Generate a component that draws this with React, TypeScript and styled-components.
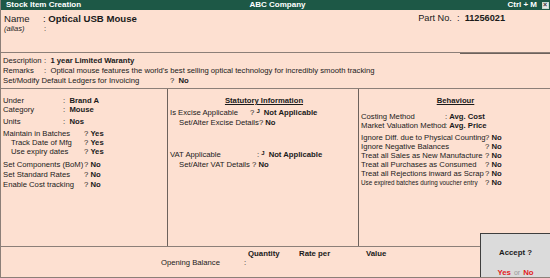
import React from 'react';
import styled, { createGlobalStyle } from 'styled-components';

const Global = createGlobalStyle`
  body {
    margin: 0;
    background: #fde0d1;
    font-family: "Liberation Sans", Arial, sans-serif;
  }
`;

const Screen = styled.div`
  position: relative;
  width: 550px;
  height: 278px;
  box-sizing: border-box;
  background: #fde0d1;
  border-left: 1px solid #8c7f78;
  border-bottom: 1px solid #8c7f78;
  color: #1a1a1a;
  font-size: 7.7px;
  display: flex;
  flex-direction: column;
  overflow: hidden;
`;

const TitleBar = styled.div`
  height: 10px;
  background: #1d5846;
  color: #fff;
  font-weight: bold;
  font-size: 8px;
  line-height: 10px;
  display: grid;
  grid-template-columns: 1fr auto 1fr;
  padding: 0 1px 0 5px;
`;

const TitleRight = styled.div`
  display: flex;
  justify-content: flex-end;
  align-items: center;
  gap: 5px;
`;

const CloseBox = styled.span`
  width: 7px;
  height: 7px;
  box-sizing: border-box;
  border: 1px solid #c8d8d0;
  background: #e8e8e8;
  position: relative;
  &::after {
    content: '×';
    position: absolute;
    left: 0;
    top: -3px;
    font-size: 7px;
    color: #333;
  }
`;

const NameSection = styled.div`
  height: 43px;
  box-sizing: border-box;
  border-bottom: 1px solid #8c7f78;
  display: flex;
  flex-direction: column;
  padding: 3px 0 0 3px;
`;

const NameRow = styled.div`
  display: flex;
  font-size: 9.6px;
  line-height: 11px;
`;

const NameLabel = styled.span`
  width: 39px;
`;

const Strong = styled.span`
  font-weight: bold;
`;

const PartNo = styled.span`
  margin-left: auto;
  margin-right: 45px;
  font-size: 9.2px;
`;

const Alias = styled.div`
  display: flex;
  font-size: 7.5px;
  line-height: 10px;
  font-style: italic;
  span:last-child { font-style: normal; }
`;

const PartLine = styled.div`
  margin-top: auto;
  align-self: flex-end;
  width: 90px;
  height: 1px;
  background: #6d625c;
  margin-bottom: -2px;
`;

const DescSection = styled.div`
  height: 36px;
  box-sizing: border-box;
  border-bottom: 1px solid #8c7f78;
  padding: 3px 0 0 2px;
  display: flex;
  flex-direction: column;
  gap: 1px;
`;

const Line = styled.div<{ $indent?: number; $gap?: number }>`
  display: flex;
  align-items: baseline;
  white-space: nowrap;
  line-height: 9px;
  padding-left: ${p => p.$indent ?? 0}px;
  margin-top: ${p => p.$gap ?? 0}px;
`;

const Lbl = styled.span<{ $w: number; $small?: boolean }>`
  display: inline-block;
  width: ${p => p.$w}px;
  flex-shrink: 0;
  font-size: ${p => (p.$small ? '6.3px' : 'inherit')};
`;

const Columns = styled.div`
  height: 158px;
  display: grid;
  grid-template-columns: 167px 191px 1fr;
  border-bottom: 1px solid #8c7f78;
  box-sizing: border-box;
`;

const Col = styled.div<{ $border?: boolean }>`
  border-right: ${p => (p.$border ? '1px solid #6d625c' : 'none')};
  padding: 7px 0 0 2px;
  display: flex;
  flex-direction: column;
`;

const Heading = styled.div`
  text-align: center;
  font-weight: bold;
  text-decoration: underline;
  font-size: 7.7px;
  line-height: 9px;
  margin-bottom: 2px;
`;

const Tick = styled.span`
  font-size: 6px;
  font-weight: bold;
  position: relative;
  top: -2px;
  margin-right: 4px;
`;

const Footer = styled.div`
  flex: 1;
  display: flex;
  flex-direction: column;
  padding-top: 2px;
`;

const HeadRow = styled.div`
  display: flex;
  font-weight: bold;
  font-size: 7.8px;
  line-height: 9px;
  padding-left: 247px;
`;

const HeadCell = styled.span<{ $w: number }>`
  width: ${p => p.$w}px;
`;

const OpenRow = styled.div`
  display: flex;
  font-size: 7.7px;
  line-height: 9px;
  padding-left: 160px;
`;

const AcceptBox = styled.div`
  position: absolute;
  right: 0;
  bottom: 0;
  width: 70px;
  height: 44px;
  box-sizing: border-box;
  background: #dbdbdb;
  border-top: 1px solid #3e3e3e;
  border-left: 1px solid #3e3e3e;
  display: flex;
  flex-direction: column;
  align-items: center;
  justify-content: space-between;
  padding: 14px 0 0;
  font-size: 7.8px;
  font-weight: bold;
`;

const Red = styled.span`
  color: #e21b1b;
  font-weight: bold;
`;

const Or = styled.span`
  color: #9a9a9a;
  font-weight: normal;
  font-size: 7px;
  margin: 0 3px;
`;

export default function App() {
  return (
    <>
      <Global />
      <Screen>
        <TitleBar>
          <span>Stock Item Creation</span>
          <span>ABC Company</span>
          <TitleRight>
            <span>Ctrl + M</span>
            <CloseBox />
          </TitleRight>
        </TitleBar>

        <NameSection>
          <NameRow>
            <NameLabel>Name</NameLabel>
            <span>:&nbsp;</span>
            <Strong>Optical USB Mouse</Strong>
            <PartNo>Part No. &nbsp;: &nbsp;<Strong>11256021</Strong></PartNo>
          </NameRow>
          <Alias>
            <Lbl $w={40}>(alias)</Lbl>
            <span>:</span>
          </Alias>
          <PartLine />
        </NameSection>

        <DescSection>
          <Line>
            <Lbl $w={41}>Description</Lbl>
            <span>:&nbsp;&nbsp;</span>
            <Strong>1 year Limited Waranty</Strong>
          </Line>
          <Line>
            <Lbl $w={41}>Remarks</Lbl>
            <span>:&nbsp;&nbsp;Optical mouse features the world's best selling optical technology for incredibly smooth tracking</span>
          </Line>
          <Line>
            <Lbl $w={167}>Set/Modify Default Ledgers for Invoicing</Lbl>
            <span>?&nbsp;&nbsp;</span>
            <Strong>No</Strong>
          </Line>
        </DescSection>

        <Columns>
          <Col $border>
            <Line><Lbl $w={60}>Under</Lbl><span>:&nbsp;&nbsp;</span><Strong>Brand A</Strong></Line>
            <Line><Lbl $w={60}>Category</Lbl><span>:&nbsp;&nbsp;</span><Strong>Mouse</Strong></Line>
            <Line $gap={3}><Lbl $w={60}>Units</Lbl><span>:&nbsp;&nbsp;</span><Strong>Nos</Strong></Line>
            <Line $gap={3}><Lbl $w={81}>Maintain in Batches</Lbl><span>?&nbsp;</span><Strong>Yes</Strong></Line>
            <Line $indent={8}><Lbl $w={73}>Track Date of Mfg</Lbl><span>?&nbsp;</span><Strong>Yes</Strong></Line>
            <Line $indent={8}><Lbl $w={73}>Use expiry dates</Lbl><span>?&nbsp;</span><Strong>Yes</Strong></Line>
            <Line $gap={4}><Lbl $w={81}>Set Components (BoM)</Lbl><span>?&nbsp;</span><Strong>No</Strong></Line>
            <Line $gap={1}><Lbl $w={81}>Set Standard Rates</Lbl><span>?&nbsp;</span><Strong>No</Strong></Line>
            <Line $gap={1}><Lbl $w={81}>Enable Cost tracking</Lbl><span>?&nbsp;</span><Strong>No</Strong></Line>
          </Col>

          <Col $border>
            <Heading>Statutory Information</Heading>
            <Line $gap={1}><Lbl $w={80}>Is Excise Applicable</Lbl><span>?&nbsp;</span><Tick>J</Tick><Strong>Not Applicable</Strong></Line>
            <Line $indent={9}><span>Set/Alter Excise Details?&nbsp;</span><Strong>No</Strong></Line>
            <Line $gap={23}><Lbl $w={87}>VAT Applicable</Lbl><span>:&nbsp;</span><Tick>J</Tick><Strong>Not Applicable</Strong></Line>
            <Line $indent={9}><span>Set/Alter VAT Details ?&nbsp;</span><Strong>No</Strong></Line>
          </Col>

          <Col>
            <Heading>Behaviour</Heading>
            <Line $gap={5}><Lbl $w={84}>Costing Method</Lbl><span>:&nbsp;</span><Strong>Avg. Cost</Strong></Line>
            <Line><Lbl $w={84}>Market Valuation Method</Lbl><span>:&nbsp;</span><Strong>Avg. Price</Strong></Line>
            <Line $gap={3}><Lbl $w={124}>Ignore Diff. due to Physical Counting</Lbl><span>?&nbsp;</span><Strong>No</Strong></Line>
            <Line><Lbl $w={124}>Ignore Negative Balances</Lbl><span>?&nbsp;</span><Strong>No</Strong></Line>
            <Line><Lbl $w={124}>Treat all Sales as New Manufacture</Lbl><span>?&nbsp;</span><Strong>No</Strong></Line>
            <Line><Lbl $w={124}>Treat all Purchases as Consumed</Lbl><span>?&nbsp;</span><Strong>No</Strong></Line>
            <Line><Lbl $w={124}>Treat all Rejections inward as Scrap</Lbl><span>?&nbsp;</span><Strong>No</Strong></Line>
            <Line><Lbl $w={124} $small>Use expired batches during voucher entry</Lbl><span>?&nbsp;</span><Strong>No</Strong></Line>
          </Col>
        </Columns>

        <Footer>
          <HeadRow>
            <HeadCell $w={51}>Quantity</HeadCell>
            <HeadCell $w={67}>Rate per</HeadCell>
            <HeadCell $w={40}>Value</HeadCell>
          </HeadRow>
          <OpenRow>
            <Lbl $w={83}>Opening Balance</Lbl>
            <span>:</span>
          </OpenRow>
        </Footer>

        <AcceptBox>
          <span>Accept ?</span>
          <span><Red>Yes</Red><Or>or</Or><Red>No</Red></span>
        </AcceptBox>
      </Screen>
    </>
  );
}
